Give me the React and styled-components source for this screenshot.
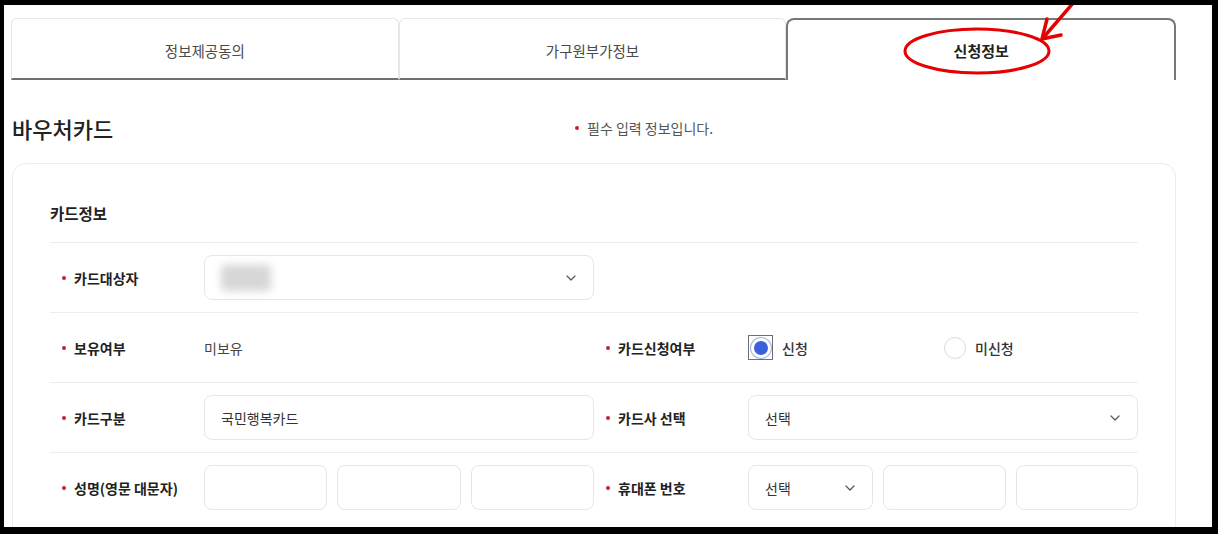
import React from "react";
import styled, { createGlobalStyle } from "styled-components";
import { ChevronDown } from "lucide-react";

const GlobalStyle = createGlobalStyle`
  html, body {
    margin: 0;
    padding: 0;
    background: #000;
  }
  body {
    font-family: "Noto Sans CJK KR", "Noto Sans", sans-serif;
    color: #222;
  }
  * { box-sizing: border-box; }
`;

const Frame = styled.div`
  position: relative;
  width: 1218px;
  height: 534px;
  border-style: solid;
  border-color: #000;
  border-width: 5px 6px 7px 4px;
  background: #fff;
  overflow: hidden;
  padding: 13px 36px 0 7px;
`;

const TabBar = styled.div`
  display: flex;
  height: 62px;
`;

const Tab = styled.div`
  flex: 1;
  display: flex;
  align-items: center;
  justify-content: center;
  font-size: ${(p) => (p.$active ? "15px" : "14.5px")};
  font-weight: ${(p) => (p.$active ? 700 : 400)};
  color: ${(p) => (p.$active ? "#222" : "#4a4a4a")};
  border-radius: ${(p) => (p.$active ? "8px 8px 0 0" : "6px 6px 0 0")};
  border: ${(p) => (p.$active ? "2px solid #777" : "1px solid #e6e6e6")};
  border-bottom: ${(p) => (p.$active ? "none" : "2px solid #6e6e6e")};
  padding-top: ${(p) => (p.$active ? "0" : "3px")};
`;

const HeadRow = styled.div`
  display: grid;
  grid-template-columns: 563px 1fr;
  align-items: center;
  margin-top: 33px;
  padding-left: 1px;
`;

const PageTitle = styled.h2`
  margin: 0;
  font-size: 22px;
  line-height: 30px;
  font-weight: 500;
  color: #222;
`;

const Note = styled.p`
  margin: 0;
  display: flex;
  align-items: center;
  gap: 8px;
  font-size: 14px;
  color: #555;
`;

const Dot = styled.span`
  display: inline-block;
  width: 4px;
  height: 4px;
  border-radius: 50%;
  background: #c8202f;
  flex-shrink: 0;
`;

const Card = styled.section`
  margin: 20px 0 0 1px;
  width: 1164px;
  border: 1px solid #ececec;
  border-radius: 14px;
  padding: 37px 37px 40px;
`;

const CardTitle = styled.h3`
  margin: 0 0 17px;
  font-size: 15.5px;
  line-height: 24px;
  font-weight: 700;
  color: #222;
`;

const Row = styled.div`
  display: grid;
  grid-template-columns: 154px 390px 154px 390px;
  align-items: center;
  height: 70px;
  border-top: 1px solid #ededed;
`;

const Label = styled.div`
  display: flex;
  align-items: center;
  gap: 8px;
  padding-left: 12px;
  font-size: 14px;
  font-weight: 700;
  color: #222;
`;

const Value = styled.div`
  font-size: 14px;
  color: #444;
`;

const Field = styled.div`
  height: 45px;
  border: 1px solid #e6e6e6;
  border-radius: 8px;
  display: flex;
  align-items: center;
  justify-content: space-between;
  padding: 0 14px 0 16px;
  font-size: 14px;
  color: #333;
  background: #fff;
`;

const Split = styled.div`
  display: grid;
  grid-template-columns: ${(p) => (p.$first ? `${p.$first}px 1fr 1fr` : "repeat(3, 1fr)")};
  gap: 10px;
`;

const Blurred = styled.span`
  display: block;
  width: 50px;
  height: 26px;
  background: #d6d6d6;
  border-radius: 4px;
  filter: blur(4px);
`;

const RadioGroup = styled.div`
  display: grid;
  grid-template-columns: 196px 196px;
  align-items: center;
`;

const Option = styled.label`
  display: flex;
  align-items: center;
  gap: 9px;
  font-size: 14px;
  font-weight: 500;
  color: #333;
`;

const FocusBox = styled.span`
  width: 25px;
  height: 25px;
  border: 1.5px solid #6f6f6f;
  display: flex;
  align-items: center;
  justify-content: center;
`;

const RadioOn = styled.span`
  width: 20px;
  height: 20px;
  border-radius: 50%;
  background: #3a60dc;
  border: 3px solid #fff;
  box-shadow: 0 0 0 1px #9fb3ee;
`;

const RadioOff = styled.span`
  width: 22px;
  height: 22px;
  border-radius: 50%;
  border: 1px solid #dcdcdc;
  background: #fff;
`;

const Overlay = styled.svg`
  position: absolute;
  top: -5px;
  left: -4px;
  pointer-events: none;
`;

function Req({ children }) {
  return (
    <Label>
      <Dot />
      {children}
    </Label>
  );
}

function Select({ children }) {
  return (
    <Field>
      <span>{children}</span>
      <ChevronDown size={16} strokeWidth={1.8} color="#555" />
    </Field>
  );
}

export default function App() {
  return (
    <>
      <GlobalStyle />
      <Frame>
        <TabBar>
          <Tab>정보제공동의</Tab>
          <Tab>가구원부가정보</Tab>
          <Tab $active>신청정보</Tab>
        </TabBar>

        <HeadRow>
          <PageTitle>바우처카드</PageTitle>
          <Note>
            <Dot />
            필수 입력 정보입니다.
          </Note>
        </HeadRow>

        <Card>
          <CardTitle>카드정보</CardTitle>

          <Row>
            <Req>카드대상자</Req>
            <Select>
              <Blurred />
            </Select>
          </Row>

          <Row>
            <Req>보유여부</Req>
            <Value>미보유</Value>
            <Req>카드신청여부</Req>
            <RadioGroup>
              <Option>
                <FocusBox>
                  <RadioOn />
                </FocusBox>
                신청
              </Option>
              <Option>
                <RadioOff />
                미신청
              </Option>
            </RadioGroup>
          </Row>

          <Row>
            <Req>카드구분</Req>
            <Field>국민행복카드</Field>
            <Req>카드사 선택</Req>
            <Select>선택</Select>
          </Row>

          <Row>
            <Req>성명(영문 대문자)</Req>
            <Split>
              <Field />
              <Field />
              <Field />
            </Split>
            <Req>휴대폰 번호</Req>
            <Split $first={125}>
              <Select>선택</Select>
              <Field />
              <Field />
            </Split>
          </Row>
        </Card>

        <Overlay width="1218" height="534" viewBox="0 0 1218 534">
          <ellipse cx="977" cy="51" rx="72" ry="22" fill="none" stroke="#e60000" strokeWidth="3" />
          <line x1="1074" y1="2" x2="1043" y2="38" stroke="#e60000" strokeWidth="3.5" strokeLinecap="round" />
          <polyline points="1047,19 1042,39 1061,35" fill="none" stroke="#e60000" strokeWidth="3.5" strokeLinecap="round" strokeLinejoin="round" />
        </Overlay>
      </Frame>
    </>
  );
}
